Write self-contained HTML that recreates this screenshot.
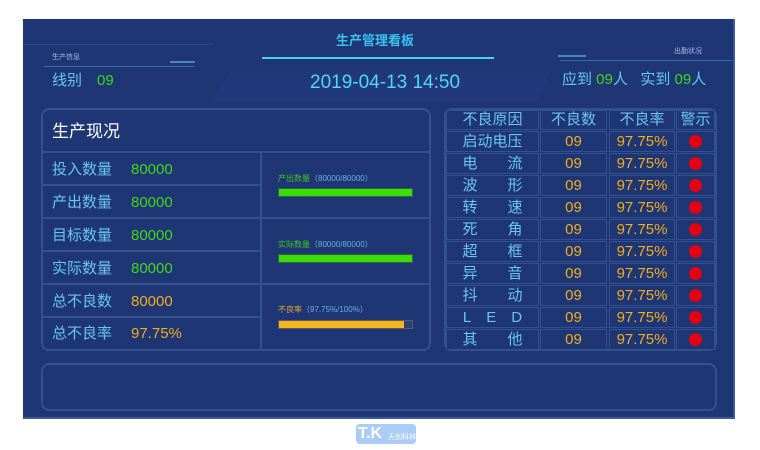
<!DOCTYPE html><html><head><meta charset="utf-8"><style>
*{margin:0;padding:0;box-sizing:border-box}
body{width:760px;height:450px;background:#fff;position:relative;overflow:hidden;font-family:"Liberation Sans","Noto Sans CJK SC",sans-serif;line-height:1}
.scr{position:absolute;left:23px;top:19px;width:712px;height:400px;background:#1f3674;border-right:2px solid #3c5aa0;border-bottom:2px solid #3c5aa0}
.a{position:absolute;line-height:1}
.box{position:absolute;border:2px solid #34518f;border-radius:8px}
.hl{position:absolute;height:2px;background:#34518f}
.vl{position:absolute;width:2px;background:#34518f}
.lab{position:absolute;color:#69c6ee;font-size:15px;line-height:16px}
.num{position:absolute;font-size:15px;line-height:16px}
.g{color:#3fd61a}.o{color:#f2ac1f}
.tc{position:absolute;text-align:center;font-size:15px;line-height:16px}
.dot{position:absolute;width:13px;height:13px;border-radius:50%;background:#e30012}
</style></head><body>
<div class="scr"></div>
<div class="a" style="left:336px;top:34px;color:#3cc0ef;font-size:13px;font-weight:bold">生产管理看板</div>
<div class="a" style="left:262px;top:57px;width:232px;height:2px;background:#4fd0f0"></div>
<div class="a" style="left:23px;top:44px;width:190px;height:1px;background:#2a4584"></div>
<div class="a" style="left:210px;top:72px;width:340px;height:30px;background:#21397a;clip-path:polygon(6% 0,100% 0,96% 100%,0 100%)"></div>
<div class="a" style="left:52px;top:54px;color:#9fc0e8;font-size:7px">生产信息</div>
<div class="a" style="left:44px;top:66px;width:150px;height:1px;background:#3d6aa8"></div>
<div class="a" style="left:170px;top:61px;width:25px;height:2px;background:#4a86b8"></div>
<div class="lab" style="left:52px;top:73px">线别</div>
<div class="num g" style="left:97px;top:73px">09</div>
<div class="a" style="left:310px;top:73px;color:#4fd8f2;font-size:19px">2019-04-13 14:50</div>
<div class="a" style="left:674px;top:48px;color:#9fc0e8;font-size:7px">出勤状况</div>
<div class="a" style="left:560px;top:60px;width:172px;height:1px;background:#3d6aa8"></div>
<div class="a" style="left:558px;top:55px;width:28px;height:2px;background:#4a86b8"></div>
<div class="lab" style="left:562px;top:72px">应到 <span class="g">09</span>人&nbsp;&nbsp;&nbsp;实到 <span class="g">09</span>人</div>
<div class="box" style="left:41px;top:108px;width:390px;height:243px"></div>
<div class="a" style="left:52px;top:123px;color:#fff;font-size:17px">生产现况</div>
<div class="hl" style="left:42px;top:151px;width:388px"></div>
<div class="vl" style="left:260px;top:152px;height:198px"></div>
<div class="hl" style="left:42px;top:184px;width:218px"></div>
<div class="hl" style="left:42px;top:217px;width:388px"></div>
<div class="hl" style="left:42px;top:250px;width:218px"></div>
<div class="hl" style="left:42px;top:283px;width:388px"></div>
<div class="hl" style="left:42px;top:316px;width:218px"></div>
<div class="lab" style="left:52px;top:162px">投入数量</div><div class="num g" style="left:131px;top:162px">80000</div>
<div class="lab" style="left:52px;top:195px">产出数量</div><div class="num g" style="left:131px;top:195px">80000</div>
<div class="lab" style="left:52px;top:228px">目标数量</div><div class="num g" style="left:131px;top:228px">80000</div>
<div class="lab" style="left:52px;top:261px">实际数量</div><div class="num g" style="left:131px;top:261px">80000</div>
<div class="lab" style="left:52px;top:294px">总不良数</div><div class="num o" style="left:131px;top:294px">80000</div>
<div class="lab" style="left:52px;top:326px">总不良率</div><div class="num o" style="left:131px;top:326px">97.75%</div>
<div class="a" style="left:278px;top:175px;font-size:8px;color:#6ab0e0"><span style="color:#3fc41a">产出数量</span>（80000/80000）</div>
<div class="a" style="left:278px;top:188px;width:135px;height:9px;background:#3ddc06;border:1px solid #2a6a3a"></div>
<div class="a" style="left:278px;top:241px;font-size:8px;color:#6ab0e0"><span style="color:#3fc41a">实际数量</span>（80000/80000）</div>
<div class="a" style="left:278px;top:254px;width:135px;height:9px;background:#3ddc06;border:1px solid #2a6a3a"></div>
<div class="a" style="left:278px;top:306px;font-size:8px;color:#6ab0e0"><span style="color:#e8a830">不良率</span>（97.75%/100%）</div>
<div class="a" style="left:278px;top:320px;width:135px;height:9px;background:#f6b41e;border:1px solid #5a5a60;box-shadow:inset -8px 0 0 #2a3f78"></div>
<div class="box" style="left:444px;top:108px;width:273px;height:243px"></div>
<div id="t"></div>
<div class="box" style="left:41px;top:363px;width:676px;height:48px"></div>
<div class="a" style="left:356px;top:424px;width:60px;height:20px;border-radius:4px;background:#a9cdf6"></div>
<div class="a" style="left:358px;top:426px;color:#fff;font-size:16px;font-weight:bold">T.K</div>
<div class="a" style="left:388px;top:434px;color:#fff;font-size:7px">天创科林</div>
<script>
var cols=[[446,93],[540,67],[609,66],[676,39]];
var names=["启动电压","电&emsp;&emsp;流","波&emsp;&emsp;形","转&emsp;&emsp;速","死&emsp;&emsp;角","超&emsp;&emsp;框","异&emsp;&emsp;音","抖&emsp;&emsp;动","L&emsp;E&emsp;D","其&emsp;&emsp;他"];
var h="";var hd=["不良原因","不良数","不良率","警示"];
for(var r=0;r<11;r++){var y=r==0?110:131+(r-1)*22;var hh=r==0?20:21;
for(var c=0;c<4;c++){h+='<div class="a" style="left:'+cols[c][0]+'px;top:'+y+'px;width:'+cols[c][1]+'px;height:'+hh+'px;border:1px solid #34518f;background:#1f3674"></div>';}
var ty=y+(r==0?2:3);
if(r==0){for(var c=0;c<4;c++)h+='<div class="tc" style="left:'+cols[c][0]+'px;top:'+ty+'px;width:'+cols[c][1]+'px;color:#69c6ee">'+hd[c]+'</div>';}
else{h+='<div class="tc" style="left:'+cols[0][0]+'px;top:'+ty+'px;width:'+cols[0][1]+'px;color:#69c6ee">'+names[r-1]+'</div>';
h+='<div class="tc o" style="left:'+cols[1][0]+'px;top:'+ty+'px;width:'+cols[1][1]+'px">09</div>';
h+='<div class="tc o" style="left:'+cols[2][0]+'px;top:'+ty+'px;width:'+cols[2][1]+'px">97.75%</div>';
h+='<div class="dot" style="left:689px;top:'+(y+4)+'px"></div>';}}
document.getElementById("t").innerHTML=h;
</script>
</body></html>
